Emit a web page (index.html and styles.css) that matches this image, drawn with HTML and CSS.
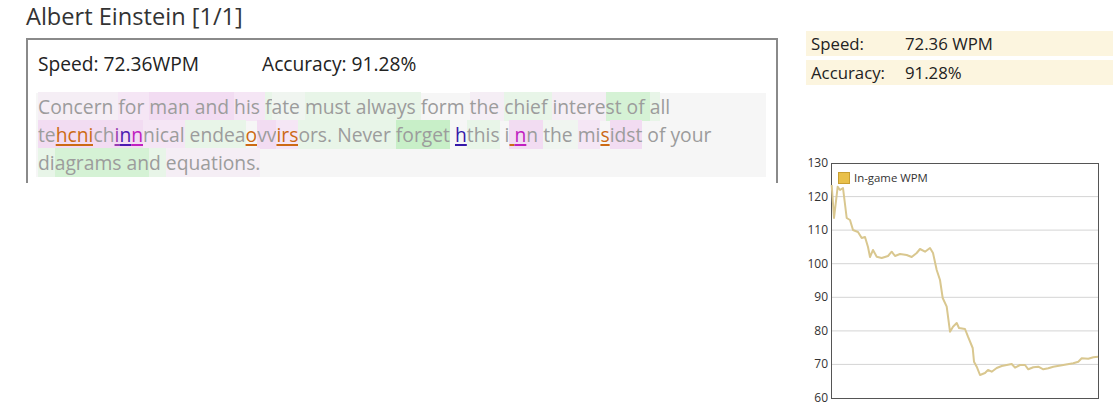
FILE: index.html
```html
<!DOCTYPE html>
<html>
<head>
<meta charset="utf-8">
<link rel="stylesheet" href="styles.css">
</head>
<body>
<div class="page">
  <div class="main">
    <h1 class="title">Albert Einstein [1/1]</h1>
    <div class="race">
      <div class="race-stats">
        <span class="stat-speed">Speed: 72.36WPM</span>
        <span class="stat-acc">Accuracy: 91.28%</span>
      </div>
      <div class="passage"><span class="p0">Concern </span><span class="p1">for </span><span class="p2">man </span><span class="p2">and </span><span class="p1">his </span><span class="g1">f</span><span class="g0">ate </span><span class="g1">must </span><span class="g1">always </span><span>form </span><span class="p0">the </span><span class="g1">chief </span><span class="p0">intere</span><span class="g2">st of </span><span class="g1">a</span><span>ll</span><br><span class="p2">te</span><span class="p2"><u class="e-or">hcni</u></span><span class="p2">ch</span><span class="p2"><u class="e-pu1">i</u><u class="e-pu2">n</u><u class="e-ma">n</u></span><span class="p1">nical</span><span class="g1"> endea</span><u class="e-or">o</u><span class="p2">vv</span><span class="p1"><u class="e-or">irs</u></span><span class="g1">ors. Never </span><span class="g3">forget</span> <u class="e-bl">h</u><span class="g1">this</span> i<span class="p2"><u class="e-or"> </u><u class="e-ma">n</u>n </span><span class="g0">the </span><span class="p1">mi</span><u class="e-or">s</u><span class="p2">idst</span> of your<span class="g1"> </span><br><span class="g1">di</span><span class="g2">agrams an</span><span class="g1">d </span><span class="p0">equations.</span></div>
    </div>
  </div>
  <div class="side">
    <div class="summary">
      <div class="sum-row"><span class="sum-label">Speed:</span><span>72.36 WPM</span></div>
      <div class="sum-row"><span class="sum-label">Accuracy:</span><span>91.28%</span></div>
    </div>
    <svg class="chart" width="307" height="252" viewBox="0 0 307 252">
      <g class="grid">
        <line x1="25" y1="41.6" x2="292" y2="41.6"/>
        <line x1="25" y1="75.1" x2="292" y2="75.1"/>
        <line x1="25" y1="108.7" x2="292" y2="108.7"/>
        <line x1="25" y1="142.3" x2="292" y2="142.3"/>
        <line x1="25" y1="175.9" x2="292" y2="175.9"/>
        <line x1="25" y1="209.4" x2="292" y2="209.4"/>
      </g>
      <rect class="frame" x="25.5" y="8.5" width="267" height="235"/>
      <g class="ylab">
        <text x="22" y="12">130</text>
        <text x="22" y="45.6">120</text>
        <text x="22" y="79.1">110</text>
        <text x="22" y="112.7">100</text>
        <text x="22" y="146.3">90</text>
        <text x="22" y="179.9">80</text>
        <text x="22" y="213.4">70</text>
        <text x="22" y="247">60</text>
      </g>
      <polyline class="wpm" points="25.7,30 28,63 31.7,31.7 34,35 37,33 40.7,63 44,65 47,75 52,77 55.7,83 59,82 62,92 64,102 67,95 70.7,101.7 75.7,103 82,101 85.7,96.7 89,101 94,99 100.7,100 105.7,102 110.7,98 114,94 119,96.7 124,93 127,98 130.7,115 134,125 136.7,143 140.7,151.7 144,176.7 147,171.7 150.7,168 153,173 159,174 162,181.7 166.7,193 168,206.7 170.7,211.7 174,220 179,218 182,215 185.7,216.7 190.7,213 195.7,211 200.7,210 205.7,209 209,212.7 214,210 219,210 222.3,214.3 227.3,212.3 232.3,211.7 237.3,214.3 242.3,213.3 247.3,211.7 257.3,210 267.3,208.3 272.3,206.7 275.7,203.3 282.3,203.7 287.3,202.3 292,201.7"/>
      <rect class="swatch" x="32.5" y="17.5" width="11" height="11"/>
      <text class="legend" x="48" y="27">In-game WPM</text>
    </svg>
  </div>
</div>
</body>
</html>
```

FILE: styles.css
```css
html, body {
  margin: 0;
  padding: 0;
  background: #fff;
}
body {
  font-family: "Open Sans", "Liberation Sans", sans-serif;
  color: #333;
}
.page {
  display: flex;
  align-items: flex-start;
}
.main {
  width: 752px;
  padding-left: 26px;
  flex: none;
}
.title {
  margin: 0;
  font-weight: normal;
  font-size: 23.6px;
  line-height: 32px;
  height: 38px;
  color: #333;
}
.race {
  border: 2px solid #8a8a8a;
  border-bottom: none;
  height: 145px;
  box-sizing: border-box;
  padding: 0 10px 0 8px;
}
.race-stats {
  display: flex;
  font-size: 19.2px;
  line-height: 24px;
  padding: 12px 0 0 2px;
  height: 41px;
  color: #222;
}
.stat-speed {
  width: 224px;
}
.passage {
  background: #f6f6f6;
  color: #9c9c9c;
  font-size: 19.3px;
  line-height: 28px;
  padding: 0 2px;
  height: 84px;
}
.passage span {
  padding: 1px 0;
}
.passage u {
  text-decoration-thickness: 2px;
  text-underline-offset: 2px;
}
.p0 { background: #f5eef5; }
.p1 { background: #f5e6f5; }
.p2 { background: #f2dcf2; }
.g0 { background: #f0f5f0; }
.g1 { background: #e8f5e8; }
.g2 { background: #d5f2d5; }
.g3 { background: #c8efc8; }
.e-or { color: #cc6a14; }
.e-pu1 { color: #9a3cb0; }
.e-pu2 { color: #4a18b0; }
.e-ma { color: #c020c0; }
.e-bl { color: #3418a8; }

.side {
  padding-left: 28px;
  width: 307px;
  flex: none;
}
.summary {
  display: flex;
  flex-direction: column;
  gap: 4px;
  padding-top: 31px;
}
.sum-row {
  display: flex;
  background: #fcf5df;
  height: 25px;
  line-height: 25px;
  font-size: 16.8px;
  color: #222;
  padding-left: 5px;
}
.sum-label {
  width: 94px;
}
.chart {
  display: block;
  margin-top: 70px;
  font-family: "Open Sans", "Liberation Sans", sans-serif;
}
.grid line {
  stroke: #d4d4d4;
  stroke-width: 1;
}
.frame {
  fill: none;
  stroke: #555;
  stroke-width: 1;
}
.ylab text {
  font-size: 12px;
  fill: #333;
  text-anchor: end;
}
.wpm {
  fill: none;
  stroke: #d9c78f;
  stroke-width: 2;
  stroke-linejoin: round;
}
.swatch {
  fill: #e9c04a;
  stroke: #c9a032;
  stroke-width: 1;
}
.legend {
  font-size: 11.4px;
  fill: #333;
}
```
